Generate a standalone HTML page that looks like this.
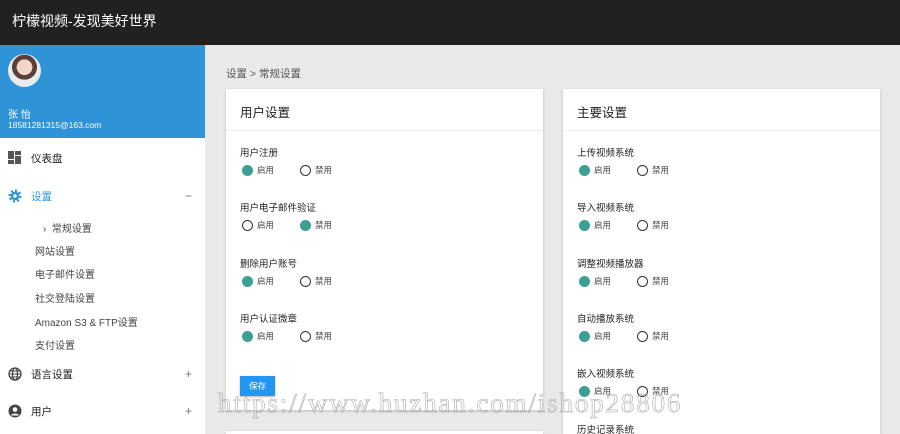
<!DOCTYPE html>
<html style="height:434px;overflow:hidden"><head><meta charset="utf-8"><style>
*{margin:0;padding:0;box-sizing:border-box}
body{width:900px;height:434px;overflow:hidden;background:#e9e9e9;font-family:"Liberation Sans","Noto Sans CJK SC",sans-serif;position:relative;color:#222}
.top{position:absolute;left:0;top:0;width:900px;height:45px;background:#212121;color:#fff;font-size:14px;line-height:43px;padding-left:12px}
.side{position:absolute;left:0;top:45px;width:205px;height:389px;background:#fff}
.prof{height:93px;background:#2f93d7;position:relative;color:#fff}
.av{position:absolute;left:8px;top:9px;width:33px;height:33px;border-radius:50%;background:radial-gradient(circle at 50% 40%,#f1d6c8 0 30%,#5a4038 31% 48%,#e9ecef 49%)}
.nm{position:absolute;left:8px;top:61px;font-size:10px}
.em{position:absolute;left:8px;top:75px;font-size:8.5px}
.it{position:absolute;left:0;width:205px;font-size:10.5px;color:#222}
.it .ic{position:absolute;left:8px}
.it .t{position:absolute;left:31px}
.it .r{position:absolute;left:185px;color:#777;font-size:12px}
.sub{position:absolute;left:35px;font-size:10px;color:#444}
.bc{position:absolute;left:226px;top:66px;font-size:10.5px;color:#555}
.card{position:absolute;background:#fff;box-shadow:0 1px 3px rgba(0,0,0,.18)}
.card h3{font-weight:normal;font-size:12.5px;position:absolute;left:14px;top:13px}
.card .hr{position:absolute;left:0;right:0;top:41px;border-top:1px solid #eee}
.lb{position:absolute;left:14px;font-size:9.5px;color:#222}
.rd{position:absolute;left:16px;font-size:8.5px;color:#444;display:flex;align-items:center}
.c{width:11px;height:11px;border-radius:50%;border:1.5px solid #333;display:inline-block;margin-right:4px}
.on{background:#3d9e94;border-color:#3d9e94}
.gap{margin-left:26px}
.wm{position:absolute;left:218px;top:388px;font-family:"Liberation Serif",serif;font-size:27px;color:transparent;-webkit-text-stroke:0.6px #aaa;letter-spacing:1.85px;white-space:nowrap}
</style></head><body>
<div class="top">柠檬视频-发现美好世界</div>
<div class="side">
<div class="prof"><div class="av"></div><div class="nm">张 怡</div><div class="em">18581281315@163.com</div></div>
<div class="it" style="top:106px"><span class="ic"><svg width="13" height="13"><rect x="0" y="0" width="6" height="8" fill="#555"/><rect x="7" y="0" width="6" height="4" fill="#555"/><rect x="0" y="9" width="6" height="4" fill="#555"/><rect x="7" y="5" width="6" height="8" fill="#555"/></svg></span><span class="t">仪表盘</span></div>
<div class="it" style="top:144px;color:#2f93d7"><span class="ic"><svg width="14" height="14" viewBox="0 0 14 14"><circle cx="7" cy="7" r="5" fill="none" stroke="#2f93d7" stroke-width="3" stroke-dasharray="2 1.9"/><circle cx="7" cy="7" r="4.2" fill="#2f93d7"/><circle cx="7" cy="7" r="1.8" fill="#fff"/></svg></span><span class="t">设置</span><span class="r">−</span></div>
<div class="sub" style="top:175px;left:43px">›&nbsp; 常规设置</div>
<div class="sub" style="top:198px">网站设置</div>
<div class="sub" style="top:221px">电子邮件设置</div>
<div class="sub" style="top:245px">社交登陆设置</div>
<div class="sub" style="top:269px">Amazon S3 &amp; FTP设置</div>
<div class="sub" style="top:292px">支付设置</div>
<div class="it" style="top:322px"><span class="ic"><svg width="14" height="14"><circle cx="7" cy="7" r="6" fill="none" stroke="#444" stroke-width="1.3"/><ellipse cx="7" cy="7" rx="2.5" ry="6" fill="none" stroke="#444" stroke-width="1.2"/><path d="M1 7h12M2 4h10M2 10h10" stroke="#444" stroke-width="1"/></svg></span><span class="t">语言设置</span><span class="r">+</span></div>
<div class="it" style="top:359px"><span class="ic"><svg width="14" height="14"><circle cx="7" cy="7" r="6.5" fill="#444"/><circle cx="7" cy="5.5" r="2.3" fill="#fff"/><path d="M3 11.5c1-2.5 7-2.5 8 0" fill="#fff"/></svg></span><span class="t">用户</span><span class="r">+</span></div>
</div>
<div class="bc">设置 &gt; 常规设置</div>
<div class="card" style="left:226px;top:89px;width:317px;height:321px">
<h3>用户设置</h3><div class="hr"></div>
<div class="lb" style="top:56px">用户注册</div><div class="rd" style="top:75px"><span class="c on"></span>启用<span class="c gap"></span>禁用</div>
<div class="lb" style="top:111px">用户电子邮件验证</div><div class="rd" style="top:130px"><span class="c"></span>启用<span class="c on gap"></span>禁用</div>
<div class="lb" style="top:167px">删除用户账号</div><div class="rd" style="top:186px"><span class="c on"></span>启用<span class="c gap"></span>禁用</div>
<div class="lb" style="top:222px">用户认证微章</div><div class="rd" style="top:241px"><span class="c on"></span>启用<span class="c gap"></span>禁用</div>
<div style="position:absolute;left:14px;top:287px;width:35px;height:20px;background:#2196f3;color:#fff;font-size:8.5px;text-align:center;line-height:20px;box-shadow:0 1px 2px rgba(0,0,0,.3)">保存</div>
</div>
<div class="card" style="left:226px;top:431px;width:317px;height:3px"></div>
<div class="card" style="left:563px;top:89px;width:317px;height:345px">
<h3>主要设置</h3><div class="hr"></div>
<div class="lb" style="top:56px">上传视频系统</div><div class="rd" style="top:75px"><span class="c on"></span>启用<span class="c gap"></span>禁用</div>
<div class="lb" style="top:111px">导入视频系统</div><div class="rd" style="top:130px"><span class="c on"></span>启用<span class="c gap"></span>禁用</div>
<div class="lb" style="top:167px">调整视频播放器</div><div class="rd" style="top:186px"><span class="c on"></span>启用<span class="c gap"></span>禁用</div>
<div class="lb" style="top:222px">自动播放系统</div><div class="rd" style="top:241px"><span class="c on"></span>启用<span class="c gap"></span>禁用</div>
<div class="lb" style="top:277px">嵌入视频系统</div><div class="rd" style="top:296px"><span class="c on"></span>启用<span class="c gap"></span>禁用</div>
<div class="lb" style="top:333px">历史记录系统</div>
</div>
<div class="wm">https://www.huzhan.com/ishop28806</div>
</body></html>
